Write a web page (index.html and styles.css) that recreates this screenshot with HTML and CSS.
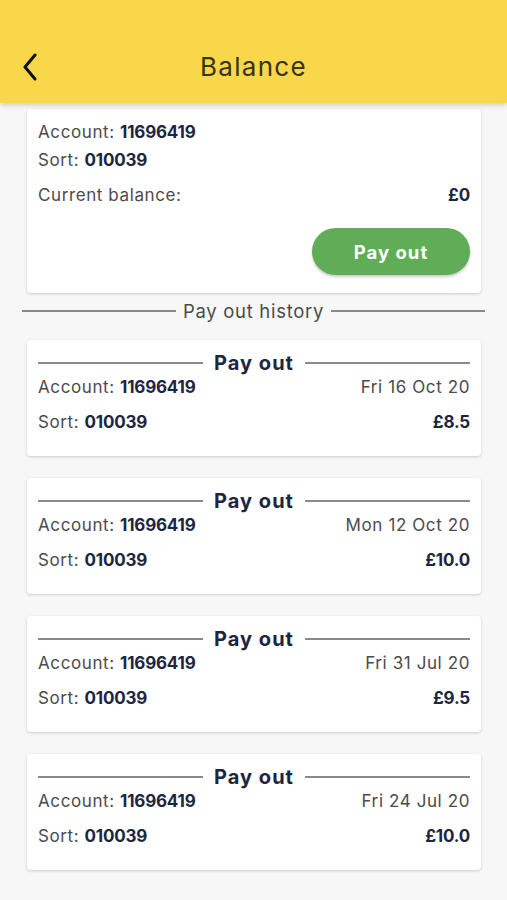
FILE: index.html
```html
<!DOCTYPE html>
<html>
<head>
<meta charset="utf-8">
<link rel="stylesheet" href="styles.css">
</head>
<body>
<header class="topbar">
  <span class="back">
    <svg width="16" height="28" viewBox="0 0 16 28"><path d="M13 2 L3 14 L13 26" fill="none" stroke="#111" stroke-width="3" stroke-linecap="round" stroke-linejoin="round"/></svg>
  </span>
  <h1 class="title">Balance</h1>
</header>
<main class="content">
  <section class="card summary">
    <div class="row"><span class="label">Account: <b>11696419</b></span></div>
    <div class="row"><span class="label">Sort: <b>010039</b></span></div>
    <div class="row balance"><span class="label">Current balance:</span><b>£0</b></div>
    <div class="actions"><button class="payout">Pay out</button></div>
  </section>

  <div class="history-divider"><span>Pay out history</span></div>

  <section class="card item">
    <div class="item-title"><span>Pay out</span></div>
    <div class="row"><span class="label">Account: <b>11696419</b></span><span class="label">Fri 16 Oct 20</span></div>
    <div class="row gap"><span class="label">Sort: <b>010039</b></span><b>£8.5</b></div>
  </section>
  <section class="card item">
    <div class="item-title"><span>Pay out</span></div>
    <div class="row"><span class="label">Account: <b>11696419</b></span><span class="label">Mon 12 Oct 20</span></div>
    <div class="row gap"><span class="label">Sort: <b>010039</b></span><b>£10.0</b></div>
  </section>
  <section class="card item">
    <div class="item-title"><span>Pay out</span></div>
    <div class="row"><span class="label">Account: <b>11696419</b></span><span class="label">Fri 31 Jul 20</span></div>
    <div class="row gap"><span class="label">Sort: <b>010039</b></span><b>£9.5</b></div>
  </section>
  <section class="card item">
    <div class="item-title"><span>Pay out</span></div>
    <div class="row"><span class="label">Account: <b>11696419</b></span><span class="label">Fri 24 Jul 20</span></div>
    <div class="row gap"><span class="label">Sort: <b>010039</b></span><b>£10.0</b></div>
  </section>
</main>
</body>
</html>
```

FILE: styles.css
```css
* { box-sizing: border-box; }
html, body { margin: 0; padding: 0; }
body {
  background: #f7f7f7;
  font-family: Inter, "Open Sans", sans-serif;
  color: #4b4b4b;
  width: 507px;
  height: 900px;
  overflow: hidden;
}
.topbar {
  position: relative;
  z-index: 2;
  height: 103px;
  background: #f8d748;
  box-shadow: 0 2px 5px rgba(0,0,0,0.18);
  display: flex;
  align-items: center;
  padding: 30px 0 0 22px;
}
.back { display: flex; width: 16px; height: 28px; }
.title {
  margin: 0;
  flex: 1;
  text-align: center;
  font-weight: 400;
  font-size: 26px;
  color: #35331f;
  padding-right: 38px;
  letter-spacing: 1.3px;
}
.content { padding: 6px 26px 0 27px; }
.card {
  background: #fff;
  border-radius: 4px;
  box-shadow: 0 1px 3px rgba(0,0,0,0.18);
  padding: 9px 11px 18px;
}
.row {
  display: flex;
  justify-content: space-between;
  align-items: center;
  height: 28px;
  font-size: 17px;
}
.label { color: #4b4b4b; letter-spacing: 0.6px; }
b { font-weight: 700; color: #1d2640; letter-spacing: -0.2px; }
.summary .balance { margin-top: 7px; }
.actions { display: flex; justify-content: flex-end; margin-top: 19px; }
.payout {
  width: 158px;
  height: 47px;
  border: none;
  border-radius: 24px;
  background: #5fae57;
  color: #fff;
  font-family: inherit;
  font-size: 18.5px;
  font-weight: 700;
  letter-spacing: 1px;
  box-shadow: 0 2px 3px rgba(0,0,0,0.2);
}
.history-divider {
  display: flex;
  align-items: center;
  gap: 7px;
  margin: 6px -4px 17px -5px;
  height: 24px;
  font-size: 18.5px;
  letter-spacing: 0.7px;
  color: #4b4b4b;
}
.history-divider::before, .history-divider::after,
.item-title::before, .item-title::after {
  content: "";
  flex: 1;
  height: 1.5px;
  background: #8a8a8a;
}
.item { padding: 11px 11px 22px; margin-bottom: 22px; }
.item-title {
  display: flex;
  align-items: center;
  gap: 11px;
  height: 24px;
  font-size: 20px;
  letter-spacing: 1px;
  font-weight: 700;
  color: #1d2640;
}
.item .row { height: 24px; }
.item .row.gap { margin-top: 11px; }
```
